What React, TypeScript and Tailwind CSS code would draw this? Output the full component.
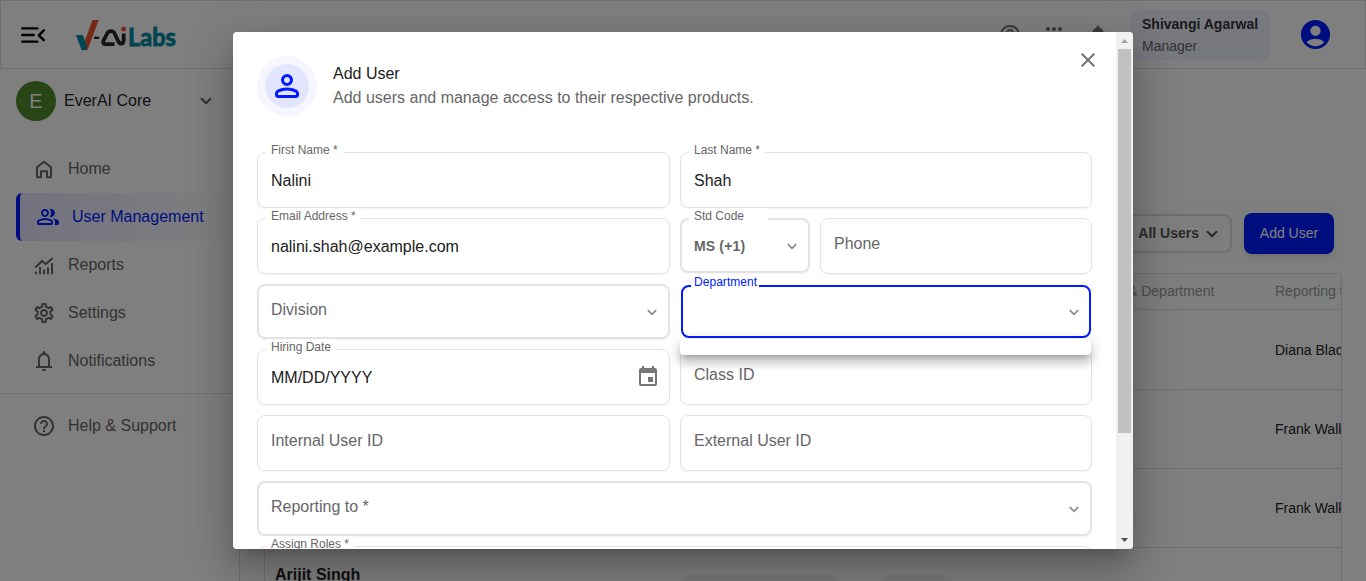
import type { ReactNode } from 'react';
import { MdAccountCircle, MdClose, MdEvent, MdHelpOutline, MdNotifications, MdOutlineSettings } from 'react-icons/md';

const BLUE = 'text-[#001aff]';

function Symbol({ d, className }: { d: string; className: string }) {
  return (
    <svg viewBox="0 -960 960 960" fill="currentColor" className={className}>
      <path d={d} />
    </svg>
  );
}

const PERSON =
  'M480-480q-66 0-113-47t-47-113q0-66 47-113t113-47q66 0 113 47t47 113q0 66-47 113t-113 47ZM160-240v-32q0-34 17.5-62.5T224-378q62-31 126-46.5T480-440q66 0 130 15.5T736-378q29 15 46.5 43.5T800-272v32q0 33-23.5 56.5T720-160H240q-33 0-56.5-23.5T160-240Zm80 0h480v-32q0-11-5.5-20T700-306q-54-27-109-40.5T480-360q-56 0-111 13.5T260-306q-9 5-14.5 14t-5.5 20v32Zm240-320q33 0 56.5-23.5T560-640q0-33-23.5-56.5T480-720q-33 0-56.5 23.5T400-640q0 33 23.5 56.5T480-560Z';
const GROUP =
  'M40-240v-32q0-34 17.5-62.5T104-378q62-31 126-46.5T360-440q66 0 130 15.5T616-378q29 15 46.5 43.5T680-272v32q0 33-23.5 56.5T600-160H120q-33 0-56.5-23.5T40-240Zm698 80q11-18 16.500-38.500T760-240v-40q0-44-24.500-84.500T666-434q51 6 96 20.500t84 35.500q36 20 55 44.500t19 53.500v40q0 33-23.500 56.500T840-160H738ZM360-480q-66 0-113-47t-47-113q0-66 47-113t113-47q66 0 113 47t47 113q0 66-47 113t-113 47Zm400-160q0 66-47 113t-113 47q-11 0-28-2.500t-28-5.500q27-32 41.500-71t14.500-81q0-42-14.500-81T544-792q14-5 28-6.500t28-1.500q66 0 113 47t47 113ZM120-240h480v-32q0-11-5.500-20T580-306q-54-27-109-40.500T360-360q-56 0-111 13.500T140-306q-9 5-14.500 14t-5.500 20v32Zm240-320q33 0 56.500-23.500T440-640q0-33-23.500-56.500T360-720q-33 0-56.500 23.500T280-640q0 33 23.500 56.500T360-560Z';
const BELL =
  'M160-200v-80h80v-280q0-83 50-147.500T420-792v-28q0-25 17.500-42.500T480-880q25 0 42.500 17.500T540-820v28q80 20 130 84.500T720-560v280h80v80H160Zm320 120q-33 0-56.500-23.500T400-160h160q0 33-23.500 56.500T480-80ZM320-280h320v-280q0-66-47-113t-113-47q-66 0-113 47t-47 113v280Z';

function Chevron({ className }: { className: string }) {
  return (
    <svg viewBox="0 0 12 8" fill="none" stroke="currentColor" className={className}>
      <path d="M1 1.200 6 6.200l5-5" strokeWidth="2.100" />
    </svg>
  );
}

function HomeIcon() {
  return (
    <svg viewBox="0 0 24 24" fill="none" stroke="currentColor" strokeWidth="2" strokeLinejoin="round" className="size-6">
      <path d="M5 10.200 12 4.700l7 5.500V20.200h-4v-6H9v6H5z" />
    </svg>
  );
}

function ReportsIcon() {
  return (
    <svg viewBox="0 0 24 24" fill="none" stroke="currentColor" strokeWidth="2" className="size-6">
      <path d="M3.200 14.500 10.200 7.900l3.400 3.300L20.700 5" />
      <path d="M4 18.500v2.800M8 14v7.300M12 16.500v4.800M16 14.500v6.800M20 10.300v11" />
    </svg>
  );
}

function Logo() {
  return (
    <svg viewBox="0 0 102 34" className="h-[34px] w-[102px] overflow-visible">
      <path d="M16.500 2h6.200L11.500 32H5.500z" fill="#f0512d" />
      <path d="M0 17h5.800q1.200 0 1.600 1.400l2.600 7.600 1 1L10 32H6.500q-1 0-1.400-1.200z" fill="#008aa0" />
      <path d="M18 19.800h5.200" stroke="#262626" strokeWidth="2.400" />
      <path
        d="M38.500 26.200H30c-2.800 0-3.500-1.500-2.500-3.700l3.900-7.300c1.500-2.900 5.600-2.900 7.100 0l3.700 7.900c1.500 3.300 5.500 3.800 5.500-1V15.500"
        fill="none"
        stroke="#262626"
        strokeWidth="3.800"
        strokeLinejoin="round"
      />
      <circle cx="47.600" cy="11.200" r="2.400" fill="#f0512d" />
      <text x="52" y="28" textLength="48" lengthAdjust="spacingAndGlyphs" fill="#008aa0" stroke="#008aa0" strokeWidth="0.900" className="font-['Lato',sans-serif] text-[25px] font-bold">
        Labs
      </text>
    </svg>
  );
}

function AppsIcon() {
  return (
    <svg viewBox="0 0 24 24" fill="currentColor" className="mr-5 size-6">
      {[6, 12, 18].map((cy) => [6, 12, 18].map((cx) => <circle key={`${cx}-${cy}`} cx={cx} cy={cy} r="2.100" />))}
    </svg>
  );
}

function Header() {
  return (
    <header className="flex h-[69px] shrink-0 items-center border border-[#dedede] pr-8 pl-5">
      <svg viewBox="0 0 24 16" fill="none" stroke="#000" strokeWidth="2.400" strokeLinecap="round" className="h-4 w-6">
        <path d="M1.200 1.400h15.200M1.200 8h11.400M1.200 14.600h15.200" />
        <path d="m22.800 3.400-5 4.900 5 4.900" strokeLinejoin="round" />
      </svg>
      <div className="ml-[31px]">
        <Logo />
      </div>
      <div className="ml-auto flex items-center text-[#757575]">
        <MdHelpOutline className="mr-5 size-6" />
        <AppsIcon />
        <MdNotifications className="mr-5 size-6" />
        <div className="h-[50px] w-[140px] rounded-lg bg-[#f1f3ff] pt-[3px] pl-3 text-sm leading-[22px]">
          <div className="font-bold text-[#333]">Shivangi Agarwal</div>
          <div className="text-[#666]">Manager</div>
        </div>
        <MdAccountCircle className={`ml-7 size-[35px] ${BLUE}`} />
      </div>
    </header>
  );
}

function NavItem({ icon, label }: { icon: ReactNode; label: string }) {
  return (
    <div className="flex h-12 items-center gap-3 pl-8 text-[#666]">
      {icon}
      <span>{label}</span>
    </div>
  );
}

function Sidebar() {
  return (
    <aside className="w-60 shrink-0 border-r border-[#dedede]">
      <div className="flex h-16 items-center pl-4">
        <div className="flex size-10 items-center justify-center rounded-full bg-[#4f8a2b] text-xl text-white">E</div>
        <span className="ml-2 w-[136px] text-[#222]">EverAI Core</span>
        <Chevron className="h-2 w-3 text-[#666]" />
      </div>
      <nav className="mt-3">
        <NavItem icon={<HomeIcon />} label="Home" />
        <div className="ml-4 flex h-12 items-center gap-3 rounded-l-md border-l-4 border-[#001aff] bg-linear-to-r from-[#e4e6ff] to-white pl-4 text-[#001aff]">
          <Symbol d={GROUP} className="size-6" />
          <span>User Management</span>
        </div>
        <NavItem icon={<ReportsIcon />} label="Reports" />
        <NavItem icon={<MdOutlineSettings className="size-6" />} label="Settings" />
        <NavItem icon={<Symbol d={BELL} className="size-6" />} label="Notifications" />
      </nav>
      <div className="mt-2 border-t border-[#dedede] pt-2">
        <NavItem icon={<MdHelpOutline className="size-6" />} label="Help & Support" />
      </div>
    </aside>
  );
}

function UserRow({ name, manager, tall }: { name?: string; manager?: string; tall?: boolean }) {
  return (
    <div className={`flex items-center border-t border-[#dedede] text-sm whitespace-nowrap text-[#222] ${tall ? 'h-20' : 'h-[79px]'}`}>
      <div className="w-[1010px] shrink-0 pl-2.5">{name}</div>
      <div>{manager}</div>
    </div>
  );
}

function UsersPage() {
  return (
    <main className="min-w-0 flex-1 pt-[135px] pr-6 pl-6">
      <div className="flex h-[59px] items-center justify-end rounded-lg bg-[#fbfdfd] pr-2">
        <div className="flex h-[39px] w-[160px] items-center justify-end gap-[7px] rounded-lg border-2 border-[#dedede] pr-3 text-sm font-bold text-[#555]">
          <span className="pb-0.5">All Users</span>
          <Chevron className="h-2 w-3" />
        </div>
        <div className="ml-3 flex h-[41px] w-[90px] items-center justify-center rounded-lg bg-[#001aff] pb-px text-sm text-white shadow-md">Add User</div>
      </div>
      <div className="mt-2.5 h-[330px] overflow-hidden rounded-t border border-[#dedede]">
        <div className="flex h-[35px] items-center bg-[#fafcfc] pb-0.5 text-sm whitespace-nowrap text-[#999]">
          <div className="w-[863px] shrink-0" />
          <div className="w-[147px] shrink-0">&amp; Department</div>
          <div>Reporting to</div>
        </div>
        <UserRow manager="Diana Black" tall />
        <UserRow manager="Frank Walker" />
        <UserRow manager="Frank Walker" />
        <div className="flex items-start border-t border-[#dedede] pt-[15px] pl-2.5">
          <span className="w-[403px] font-bold text-[#222]">Arijit Singh</span>
          <span className="mt-3 h-7 w-[164px] rounded-full bg-[#f2f2f2]" />
          <span className="mt-3 ml-9 h-7 w-[77px] rounded-full bg-[#f2f2f2]" />
        </div>
      </div>
    </main>
  );
}

function Label({ children }: { children: ReactNode }) {
  return <span className="absolute -top-[11px] left-2 bg-white pr-[5px] pl-[5px] text-xs leading-4 whitespace-nowrap text-[#666]">{children}</span>;
}

type FieldProps = { label?: string; value?: string; placeholder?: string; className?: string; children?: ReactNode };

function TextField({ label, value, placeholder, className = 'flex-1', children }: FieldProps) {
  return (
    <div className={`relative flex h-14 items-center rounded-lg border border-[#e3e3e3] pr-2 pl-[13px] shadow-[0_1px_2px_rgba(0,0,0,0.05)] ${className}`}>
      {label && <Label>{label}</Label>}
      {value && <span className="mt-0.5 flex-1 text-[#212121]">{value}</span>}
      {placeholder && <span className="mb-[5px] text-[#666]">{placeholder}</span>}
      {children}
    </div>
  );
}

function SelectField({ label, value, placeholder, className = 'flex-1' }: FieldProps) {
  return (
    <div className={`relative flex h-[55px] items-center justify-between rounded-lg border-2 border-[#e3e3e3] pr-[11px] pl-3 shadow-[0_1px_2px_rgba(0,0,0,0.05)] ${className}`}>
      {label && (
        <span className="absolute -top-3 left-[7px] w-[79px] bg-white pl-[5px] text-xs leading-4 text-[#666]">{label}</span>
      )}
      {value && <span className="mt-px text-sm font-bold tracking-[0.15px] text-[#666]">{value}</span>}
      {placeholder && <span className="mb-[3px] text-[#666]">{placeholder}</span>}
      <Chevron className="mt-0.5 h-[7px] w-[10px] text-[#8a8a8a]" />
    </div>
  );
}

function DepartmentField() {
  return (
    <div className="relative z-10 h-[55px] flex-1 px-px pt-px pb-px">
      <div className="relative flex h-[53px] items-center justify-end rounded-lg border-2 border-[#001aff] pr-[10px]">
        <span className="absolute -top-[13px] left-2 bg-white pr-0.5 pl-[3px] text-xs leading-4 tracking-[0.04px] text-[#001aff]">Department</span>
        <Chevron className="mt-0.5 h-[7px] w-[10px] text-[#8a8a8a]" />
      </div>
      <div className="absolute top-[55px] left-0 h-4 w-[411px] rounded bg-white shadow-[0px_5px_5px_-3px_rgba(0,0,0,0.2),0px_8px_10px_1px_rgba(0,0,0,0.14),0px_3px_14px_2px_rgba(0,0,0,0.12)]" />
    </div>
  );
}

function ScrollBar() {
  return (
    <div className="flex w-[17px] shrink-0 flex-col items-center bg-[#f1f1f1]">
      <svg viewBox="0 0 17 17" className="size-[17px]">
        <path d="M5 11h7L8.500 7z" fill="#a3a3a3" />
      </svg>
      <div className="h-[384px] w-[13px] bg-[#c1c1c1]" />
      <svg viewBox="0 0 17 17" className="mt-auto size-[17px]">
        <path d="M5 6h7l-3.500 4z" fill="#505050" />
      </svg>
    </div>
  );
}

function AddUserDialog() {
  return (
    <div className="relative flex h-[517px] w-[900px] overflow-hidden rounded bg-white">
      <div className="h-full flex-1 overflow-hidden px-6 pt-6">
        <div className="flex h-24 items-start">
          <div className="flex size-[60px] items-center justify-center rounded-full bg-[#f5f6ff]">
            <div className="flex size-11 items-center justify-center rounded-full bg-[#e3e5ff]">
              <Symbol d={PERSON} className={`size-9 ${BLUE}`} />
            </div>
          </div>
          <div className="mt-1.5 ml-4 flex-1 leading-6">
            <div className="text-[#212121]">Add User</div>
            <div className="text-[#666]">Add users and manage access to their respective products.</div>
          </div>
          <MdClose className="-mt-2 -mr-2 size-6 text-[#757575]" />
        </div>
        <div className="flex flex-col gap-2.5">
          <div className="flex gap-2.5">
            <TextField label="First Name *" value="Nalini" className="w-[413px]" />
            <TextField label="Last Name *" value="Shah" />
          </div>
          <div className="flex gap-2.5">
            <TextField label="Email Address *" value="nalini.shah@example.com" className="w-[413px]" />
            <SelectField label="Std Code" value="MS (+1)" className="w-[130px]" />
            <TextField placeholder="Phone" />
          </div>
          <div className="flex gap-2.5">
            <SelectField placeholder="Division" className="w-[413px]" />
            <DepartmentField />
          </div>
          <div className="flex gap-2.5">
            <TextField label="Hiring Date" value="MM/DD/YYYY" className="w-[413px]">
              <MdEvent className="mr-px size-6 text-[#757575]" />
            </TextField>
            <TextField placeholder="Class ID" />
          </div>
          <div className="flex gap-2.5">
            <TextField placeholder="Internal User ID" className="w-[413px]" />
            <TextField placeholder="External User ID" />
          </div>
          <SelectField placeholder="Reporting to *" className="" />
          <TextField label="Assign Roles *" className="" />
        </div>
      </div>
      <ScrollBar />
    </div>
  );
}

export default function App() {
  return (
    <div className="relative flex h-[581px] w-[1366px] flex-col overflow-hidden bg-white font-['Liberation_Sans',Arial,sans-serif] text-base">
      <Header />
      <div className="flex min-h-0 flex-1">
        <Sidebar />
        <UsersPage />
      </div>
      <div className="absolute inset-0 flex items-center justify-center bg-black/50">
        <div className="rounded shadow-[0px_11px_15px_-7px_rgba(0,0,0,0.2),0px_24px_38px_3px_rgba(0,0,0,0.14),0px_9px_46px_8px_rgba(0,0,0,0.12)]">
          <AddUserDialog />
        </div>
      </div>
    </div>
  );
}
